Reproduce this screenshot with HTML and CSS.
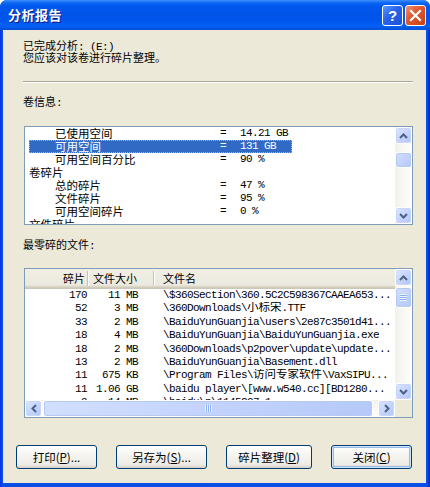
FILE: index.html
```html
<!DOCTYPE html>
<html lang="zh-CN">
<head>
<meta charset="utf-8">
<title>分析报告</title>
<link rel="stylesheet" href="styles.css">
</head>
<body>
<div class="window">
  <div class="titlebar">
    <span class="title">分析报告</span>
    <div class="tb-buttons">
      <span class="tb-btn help">?</span>
      <span class="tb-btn close"><svg width="13" height="13" viewBox="0 0 13 13"><path d="M2 2 L11 11 M11 2 L2 11" stroke="#fff" stroke-width="2.2" stroke-linecap="square"/></svg></span>
    </div>
  </div>
  <div class="client">
    <div class="content">
      <p class="intro">已完成分析<span class="m mi">: (E:)</span><br>您应该对该卷进行碎片整理。</p>
      <div class="sep"></div>
      <p class="label">卷信息<span class="m mi">:</span></p>
      <div class="listbox">
        <div class="lb-rows">
          <div class="lb-row"><span class="k ind">已使用空间</span><span class="eq m">=</span><span class="v m">14.21 GB</span></div>
          <div class="lb-row sel"><span class="k ind">可用空间</span><span class="eq m">=</span><span class="v m">131 GB</span></div>
          <div class="lb-row"><span class="k ind">可用空间百分比</span><span class="eq m">=</span><span class="v m">90 %</span></div>
          <div class="lb-row"><span class="k">卷碎片</span></div>
          <div class="lb-row"><span class="k ind">总的碎片</span><span class="eq m">=</span><span class="v m">47 %</span></div>
          <div class="lb-row"><span class="k ind">文件碎片</span><span class="eq m">=</span><span class="v m">95 %</span></div>
          <div class="lb-row"><span class="k ind">可用空间碎片</span><span class="eq m">=</span><span class="v m">0 %</span></div>
          <div class="lb-row"><span class="k">文件碎片</span></div>
        </div>
        <div class="vscroll short">
          <span class="sb-btn"><svg width="9" height="6" viewBox="0 0 9 6"><path d="M1 5 L4.5 1.5 L8 5" fill="none" stroke="#4D6185" stroke-width="2"/></svg></span>
          <span class="sb-thumb v1"></span>
          <span class="sb-fill"></span>
          <span class="sb-btn"><svg width="9" height="6" viewBox="0 0 9 6"><path d="M1 1 L4.5 4.5 L8 1" fill="none" stroke="#4D6185" stroke-width="2"/></svg></span>
        </div>
      </div>
      <p class="label label2">最零碎的文件<span class="m mi">:</span></p>
      <div class="listview">
        <div class="lv-main">
          <div class="lv-header">
            <span class="h c1">碎片</span><span class="h c2">文件大小</span><span class="h c3">文件名</span>
          </div>
          <div class="lv-rows">
            <div class="lv-row m"><span class="c1">170</span><span class="c2">11 MB</span><span class="c3">\$360Section\360.5C2C598367CAAEA653...</span></div>
            <div class="lv-row m"><span class="c1">52</span><span class="c2">3 MB</span><span class="c3">\360Downloads\<span class="cjk">小标宋</span>.TTF</span></div>
            <div class="lv-row m"><span class="c1">33</span><span class="c2">2 MB</span><span class="c3">\BaiduYunGuanjia\users\2e87c3501d41...</span></div>
            <div class="lv-row m"><span class="c1">18</span><span class="c2">4 MB</span><span class="c3">\BaiduYunGuanjia\BaiduYunGuanjia.exe</span></div>
            <div class="lv-row m"><span class="c1">18</span><span class="c2">2 MB</span><span class="c3">\360Downloads\p2pover\update\update...</span></div>
            <div class="lv-row m"><span class="c1">13</span><span class="c2">2 MB</span><span class="c3">\BaiduYunGuanjia\Basement.dll</span></div>
            <div class="lv-row m"><span class="c1">11</span><span class="c2">675 KB</span><span class="c3">\Program Files\<span class="cjk">访问专家软件</span>\VaxSIPU...</span></div>
            <div class="lv-row m"><span class="c1">11</span><span class="c2">1.06 GB</span><span class="c3">\baidu player\[www.w540.cc][BD1280...</span></div>
            <div class="lv-row m"><span class="c1">9</span><span class="c2">14 MB</span><span class="c3">\baidu\p\1145C07.1</span></div>
          </div>
        </div>
        <div class="vscroll tall">
          <span class="sb-btn"><svg width="9" height="6" viewBox="0 0 9 6"><path d="M1 5 L4.5 1.5 L8 5" fill="none" stroke="#4D6185" stroke-width="2"/></svg></span>
          <span class="sb-thumb v2"><span class="grip-h"></span></span>
          <span class="sb-fill"></span>
          <span class="sb-btn"><svg width="9" height="6" viewBox="0 0 9 6"><path d="M1 1 L4.5 4.5 L8 1" fill="none" stroke="#4D6185" stroke-width="2"/></svg></span>
        </div>
        <div class="hscroll">
          <span class="sb-btn"><svg width="6" height="9" viewBox="0 0 6 9"><path d="M5 1 L1.5 4.5 L5 8" fill="none" stroke="#4D6185" stroke-width="2"/></svg></span>
          <span class="sb-thumb h1"><span class="grip-v"></span></span>
          <span class="sb-fill"></span>
          <span class="sb-btn"><svg width="6" height="9" viewBox="0 0 6 9"><path d="M1 1 L4.5 4.5 L1 8" fill="none" stroke="#4D6185" stroke-width="2"/></svg></span>
        </div>
        <div class="corner"></div>
      </div>
    </div>
    <div class="buttons">
      <button class="btn w81">打印(<u>P</u>)...</button>
      <button class="btn w91">另存为(<u>S</u>)...</button>
      <button class="btn w86">碎片整理(<u>D</u>)</button>
      <button class="btn w81 default">关闭(<u>C</u>)</button>
    </div>
  </div>
</div>
</body>
</html>
```

FILE: styles.css
```css
* { box-sizing: border-box; }
html, body { margin: 0; padding: 0; background: #ffffff; }
body {
  font-family: "Noto Sans CJK SC", "Liberation Sans", sans-serif;
  font-size: 11px;
  color: #000;
}
.window {
  width: 430px;
  height: 487px;
  display: flex;
  flex-direction: column;
  border-radius: 7px 7px 0 0;
  overflow: hidden;
  background: linear-gradient(to right, #0831D9 0, #0A4EE6 2px, #0A50E6 427px, #0029B8 430px);
}
.titlebar {
  height: 30px;
  flex: none;
  display: flex;
  align-items: center;
  justify-content: space-between;
  padding: 0 4px 0 8px;
  background: linear-gradient(to bottom, #3D8DFB 0, #0A66F2 3px, #0058EE 6px, #0054E8 14px, #0057EE 22px, #0561F4 26px, #034FD6 30px);
}
.title {
  color: #fff;
  font-weight: bold;
  font-size: 13px;
  line-height: 16px;
  letter-spacing: 0.5px;
  text-shadow: 1px 1px 0 #0A1883;
}
.tb-buttons { display: flex; gap: 2px; }
.tb-btn {
  width: 21px;
  height: 21px;
  border: 1px solid #fff;
  border-radius: 3px;
  display: flex;
  align-items: center;
  justify-content: center;
  color: #fff;
  font-family: "Liberation Sans", sans-serif;
  font-weight: bold;
  font-size: 15px;
}
.help { background: linear-gradient(135deg, #5A96FF 0%, #2663E8 45%, #1B52D6 100%); }
.close { background: linear-gradient(135deg, #F09072 0%, #E15A32 40%, #C73E16 100%); }
.client {
  flex: 1;
  margin: 0 4px 4px 3px;
  background: #ECE9D8;
  display: flex;
  flex-direction: column;
}
.content { padding: 9px 13px 0 20px; }
.m {
  font-family: "Liberation Mono", monospace;
  font-size: 11px;
  letter-spacing: -0.6px;
}
.mi { line-height: 0; }
.cjk {
  font-family: "Noto Sans CJK SC", sans-serif;
  font-size: 11.5px;
  letter-spacing: 0;
  line-height: 0;
}
.intro { margin: 0; line-height: 12px; }
.sep {
  margin-top: 18px;
  height: 2px;
  border-top: 1px solid #ACA899;
  border-bottom: 1px solid #FFFFFF;
}
.label { margin: 12px 0 0; line-height: 12px; }
.label2 { margin-top: 13px; }
.listbox {
  margin: 19px 0 0 1px;
  height: 99px;
  border: 1px solid #7F9DB9;
  background: #fff;
  display: flex;
}
.lb-rows { flex: 1; padding-left: 4px; overflow: hidden; }
.lb-row {
  width: 263px;
  height: 13px;
  line-height: 13px;
  display: flex;
  white-space: nowrap;
  font-size: 11.5px;
}
.lb-row .k { width: 191px; }
.lb-row .k.ind { padding-left: 26px; }
.lb-row .eq { width: 20px; font-size: 11px; }
.lb-row .v { font-size: 11px; }
.lb-row.sel {
  background: #316AC5;
  color: #fff;
  outline: 1px dotted #9FB6E0;
  outline-offset: -1px;
}
.vscroll {
  width: 17px;
  flex: none;
  display: flex;
  flex-direction: column;
  background: linear-gradient(to right, #F3F1EC, #FEFEFB);
}
.hscroll {
  height: 17px;
  display: flex;
  background: linear-gradient(to bottom, #F3F1EC, #FEFEFB);
}
.sb-btn {
  width: 17px;
  height: 17px;
  flex: none;
  display: flex;
  align-items: center;
  justify-content: center;
  border: 1px solid #fff;
  border-radius: 3px;
  background: linear-gradient(135deg, #DCE6FE 0%, #C5D5FC 50%, #B1C7F7 100%);
  box-shadow: inset 0 0 0 1px #C8D6F8;
}
.sb-thumb {
  flex: none;
  display: flex;
  align-items: center;
  justify-content: center;
  border: 1px solid #fff;
  border-radius: 3px;
  background: linear-gradient(135deg, #D2DFFD 0%, #C3D3FC 50%, #B4C9F8 100%);
  box-shadow: inset 0 0 0 1px #B6C9F3;
}
.sb-fill { flex: 1; }
.v1 { height: 16px; margin-top: 8px; }
.v2 { height: 21px; margin-top: 1px; }
.h1 { width: 330px; margin-left: 1px; }
.grip-h {
  width: 7px;
  height: 7px;
  background: repeating-linear-gradient(to bottom, #EEF4FE 0, #EEF4FE 1px, #8CB0F8 1px, #8CB0F8 2px);
}
.grip-v {
  width: 7px;
  height: 7px;
  background: repeating-linear-gradient(to right, #EEF4FE 0, #EEF4FE 1px, #8CB0F8 1px, #8CB0F8 2px);
}
.listview {
  margin: 18px 0 0 1px;
  height: 150px;
  border: 1px solid #7F9DB9;
  background: #fff;
  display: grid;
  grid-template-columns: 1fr 17px;
  grid-template-rows: 131px 17px;
}
.lv-main { overflow: hidden; display: flex; flex-direction: column; }
.lv-header {
  height: 20px;
  flex: none;
  display: flex;
  align-items: center;
  background: linear-gradient(to bottom, #F1EFE2 0, #EBEAE0 16px, #E2DECD 17px, #D6D2C2 18px, #CBC7B8 19px);
  white-space: nowrap;
}
.lv-header .h {
  line-height: 15px;
  height: 15px;
  margin-bottom: 1px;
}
.c1 { width: 63px; flex: none; text-align: right; padding-right: 1px; }
.c2 { width: 66px; flex: none; text-align: right; padding-right: 16px; }
.c3 { flex: none; padding-left: 9px; white-space: nowrap; }
.lv-header .c1, .lv-header .c2 {
  border-right: 1px solid #C7C5B2;
  box-shadow: 1px 0 0 #fff;
}
.lv-header .c1 { padding-right: 2px; }
.lv-rows { flex: 1; overflow: hidden; }
.lv-row {
  height: 13.4px;
  line-height: 13.4px;
  display: flex;
  white-space: nowrap;
  overflow: hidden;
}
.corner { background: #ECE9D8; }
.buttons {
  display: flex;
  gap: 19px;
  padding: 27px 0 0 13px;
}
.btn {
  height: 24px;
  border: 1px solid #003C74;
  border-radius: 3px;
  background: linear-gradient(to bottom, #FFFFFF 0%, #F6F5F1 40%, #ECEBE5 85%, #D6D0C5 100%);
  font-family: "Noto Sans CJK SC", sans-serif;
  font-size: 11.5px;
  color: #000;
  padding: 0;
  line-height: 20px;
}
.btn u { text-decoration: underline; }
.w81 { width: 81px; }
.w91 { width: 91px; }
.w86 { width: 86px; }
.default { box-shadow: inset 0 0 0 1px #CEE7FF, inset 0 0 0 2px #98B8EA; }
```
